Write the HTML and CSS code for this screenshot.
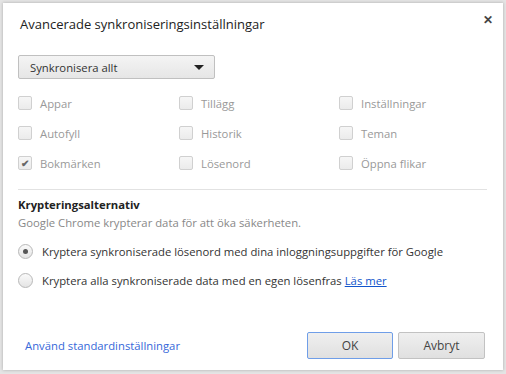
FILE: index.html
```html
<!DOCTYPE html>
<html>
<head>
<link rel="stylesheet" href="styles.css">
</head>
<body>

<div class="dialog">
  <div class="header">
    <h1>Avancerade synkroniseringsinställningar</h1>
    <span class="close">&#x2715;</span>
  </div>

  <div class="select">
    <span>Synkronisera allt</span>
    <span class="arrow"></span>
  </div>

  <div class="types">
    <label class="check"><span class="box"></span>Appar</label>
    <label class="check"><span class="box"></span>Tillägg</label>
    <label class="check"><span class="box"></span>Inställningar</label>
    <label class="check"><span class="box"></span>Autofyll</label>
    <label class="check"><span class="box"></span>Historik</label>
    <label class="check"><span class="box"></span>Teman</label>
    <label class="check"><span class="box checked">&#x2714;</span>Bokmärken</label>
    <label class="check"><span class="box"></span>Lösenord</label>
    <label class="check"><span class="box"></span>Öppna flikar</label>
  </div>

  <div class="encryption">
    <h2>Krypteringsalternativ</h2>
    <p class="desc">Google Chrome krypterar data för att öka säkerheten.</p>
    <label class="radio"><span class="dot selected"></span>Kryptera synkroniserade lösenord med dina inloggningsuppgifter för Google</label>
    <label class="radio"><span class="dot"></span>Kryptera alla synkroniserade data med en egen lösenfras&nbsp;<a href="#">Läs mer</a></label>
  </div>

  <div class="footer">
    <a class="reset" href="#">Använd standardinställningar</a>
    <div class="buttons">
      <button class="primary">OK</button>
      <button>Avbryt</button>
    </div>
  </div>
</div>

</body>
</html>
```

FILE: styles.css
```css
body {
  margin: 0;
  background-color: #e4e4e4;
  font-family: "Open Sans", "Noto Sans", sans-serif;
  font-size: 11.3px;
  color: #333;
}

.dialog {
  display: flex;
  flex-direction: column;
  width: 500px;
  height: 367px;
  margin: 3px;
  background-color: #fff;
  box-shadow: 0 0 3px rgba(0, 0, 0, 0.25);
  box-sizing: border-box;
  padding: 0 18px 0 15px;
}

.header {
  display: flex;
  justify-content: space-between;
  align-items: flex-start;
  padding: 11px 0 0 2px;
  height: 20px;
}

h1 {
  margin: 0;
  font-size: 13px;
  font-weight: normal;
  line-height: 20px;
  color: #222;
}

.close {
  margin: -3px -8px 0 0;
  font-size: 12px;
  font-weight: bold;
  color: #444;
}

.select {
  display: flex;
  justify-content: space-between;
  align-items: center;
  width: 197px;
  height: 24px;
  margin-top: 21px;
  padding: 0 10px 0 11px;
  box-sizing: border-box;
  border: 1px solid #c0c0c0;
  border-radius: 2px;
  background-image: linear-gradient(#f4f4f4, #e6e6e6);
  color: #333;
}

.arrow {
  width: 0;
  height: 0;
  border-left: 5px solid transparent;
  border-right: 5px solid transparent;
  border-top: 5px solid #222;
}

.types {
  display: grid;
  grid-template-columns: 161px 160px 1fr;
  grid-auto-rows: 30px;
  margin: 9px -2px 0 0;
  padding-bottom: 11px;
  border-bottom: 1px solid #e2e2e2;
}

.check {
  display: flex;
  align-items: center;
  color: #999;
}

.box {
  display: flex;
  justify-content: center;
  align-items: center;
  width: 12px;
  height: 12px;
  margin-right: 8px;
  border: 1px solid #d0d0d0;
  border-radius: 2px;
  background-image: linear-gradient(#f6f6f6, #ebebeb);
  font-size: 10px;
  font-weight: bold;
  color: #666;
}

.encryption {
  padding-top: 6px;
}

h2 {
  margin: 0;
  font-size: 11.3px;
  font-weight: bold;
  line-height: 18px;
  color: #222;
}

.desc {
  margin: 0 0 5px;
  line-height: 18px;
  color: #888;
}

.radio {
  display: flex;
  align-items: center;
  height: 29px;
  color: #333;
}

.dot {
  display: flex;
  justify-content: center;
  align-items: center;
  width: 13px;
  height: 13px;
  margin-right: 9px;
  border: 1px solid #b8b8b8;
  border-radius: 50%;
  background-image: linear-gradient(#fafafa, #e4e4e4);
}

.dot.selected::after {
  content: "";
  width: 5px;
  height: 5px;
  border-radius: 50%;
  background-color: #555;
}

.radio a {
  color: #15c;
}

.footer {
  display: flex;
  justify-content: space-between;
  align-items: center;
  margin-top: auto;
  margin-bottom: 11px;
}

.reset {
  margin-left: 7px;
  color: #3668d9;
  text-decoration: none;
}

.buttons {
  display: flex;
  gap: 5px;
}

button {
  width: 87px;
  height: 27px;
  border: 1px solid #c2c2c2;
  border-radius: 2px;
  background-image: linear-gradient(#efefef, #e0e0e0);
  font-family: inherit;
  font-size: 12px;
  color: #444;
}

button.primary {
  width: 86px;
  border-color: #6f9ee8;
}
```
